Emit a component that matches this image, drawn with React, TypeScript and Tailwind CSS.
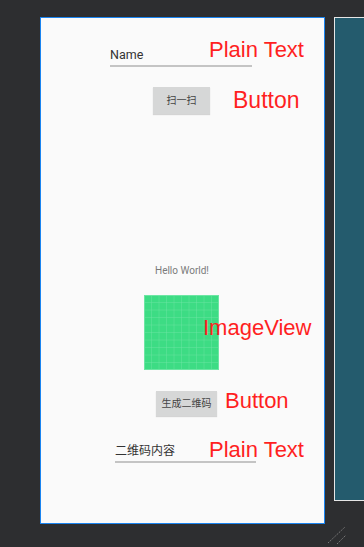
import React from 'react';

const cjk = "font-['Roboto','Noto_Sans_CJK_SC',sans-serif]";
const label = "absolute font-['Liberation_Sans',sans-serif] text-[22px] leading-none text-[#ff1f1f] whitespace-nowrap";

function QrPlaceholder() {
    const lines = [7.5, 15, 22.5, 30, 37.5, 45, 52.5, 60, 67.5];
    return (
        <svg width="75" height="75" viewBox="0 0 75 75" className="block">
            <rect x="0" y="0" width="75" height="75" fill="#3ddc84" />
            {lines.map((p) => (
                <g key={p} stroke="#6ce6a3" strokeWidth="0.6" opacity="0.8">
                    <line x1={p} y1="0" x2={p} y2="75" />
                    <line x1="0" y1={p} x2="75" y2={p} />
                </g>
            ))}
            <rect x="0.5" y="0.5" width="74" height="74" fill="none" stroke="#6ce6a3" strokeWidth="1" />
        </svg>
    );
}

export default function App() {
    return (
        <div className="relative w-[364px] h-[547px] overflow-hidden bg-[#2d2e30] flex pt-[17px] pl-[40px]">
            {/* Phone preview */}
            <div className="relative w-[285px] h-[507px] shrink-0 border border-[#1a84f0] bg-[#fafafa] flex flex-col items-start">
                {/* Name field */}
                <div className="mt-[30px] ml-[69px] w-[142px] h-[19px] border-b-2 border-[#c4c4c4] flex items-end pb-[3px]">
                    <span className={`${cjk} text-[12.5px] leading-[15px] text-[#333]`}>Name</span>
                </div>

                {/* Scan button */}
                <div className={`${cjk} mt-[20px] ml-[112px] w-[57px] h-[27px] bg-[#d6d7d7] shadow-[0_1px_1px_rgba(0,0,0,0.15)] flex items-center justify-center text-[10px] text-[#444]`}>
                    扫一扫
                </div>

                {/* Hello World */}
                <div className={`${cjk} mt-[151px] ml-[114px] text-[10px] leading-[12px] text-[#7a7a7a]`}>Hello World!</div>

                {/* Image */}
                <div className="mt-[18px] ml-[103px]">
                    <QrPlaceholder />
                </div>

                {/* Generate button */}
                <div className={`${cjk} mt-[21px] ml-[115px] w-[61px] h-[25px] bg-[#d6d7d7] shadow-[0_1px_1px_rgba(0,0,0,0.15)] flex items-center justify-center text-[10px] text-[#444]`}>
                    生成二维码
                </div>

                {/* Content field */}
                <div className="mt-[27px] ml-[74px] w-[141px] h-[20px] border-b-2 border-[#c4c4c4] flex items-end pb-[2px]">
                    <span className={`${cjk} text-[12px] leading-[15px] text-[#333]`}>二维码内容</span>
                </div>

                {/* Annotations */}
                <span className={`${label} left-[168px] top-[21px]`}>Plain Text</span>
                <span className={`${label} left-[192px] top-[71px] text-[23px]`}>Button</span>
                <span className={`${label} left-[162px] top-[299px]`}>ImageView</span>
                <span className={`${label} left-[184px] top-[372px]`}>Button</span>
                <span className={`${label} left-[168px] top-[421px]`}>Plain Text</span>
            </div>

            {/* Blueprint panel */}
            <div className="ml-[9px] w-[40px] h-[484px] shrink-0 border border-[#e6e6e6] bg-[#245b6d]" />

            {/* Resize handle */}
            <svg width="24" height="22" viewBox="0 0 24 22" className="absolute left-[325px] top-[525px]">
                <line x1="3" y1="18" x2="20" y2="2" stroke="#7a7a7a" strokeWidth="1" strokeDasharray="1.5 1" />
                <line x1="12" y1="19" x2="21" y2="10" stroke="#7a7a7a" strokeWidth="1" strokeDasharray="1.5 1" />
            </svg>
        </div>
    );
}
